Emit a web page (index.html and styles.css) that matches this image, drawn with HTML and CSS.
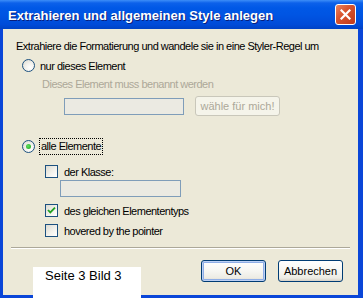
FILE: index.html
```html
<!DOCTYPE html>
<html lang="de">
<head>
    <meta charset="UTF-8">
    <title>Extrahieren und allgemeinen Style anlegen</title>
    <link rel="stylesheet" href="styles.css">
</head>
<body>
    <div class="window">
        <div class="titlebar">
            <span class="title">Extrahieren und allgemeinen Style anlegen</span>
            <span class="close">
                <svg width="11" height="11" viewBox="0 0 11 11"><path d="M1.5 1.5 L9.5 9.5 M9.5 1.5 L1.5 9.5" stroke="#fff" stroke-width="2.2" stroke-linecap="square"/></svg>
            </span>
        </div>

        <div class="dialog">
            <div class="intro">Extrahiere die Formatierung und wandele sie in eine Styler-Regel um</div>

            <div class="option first">
                <span class="radio"></span>
                <span>nur dieses Element</span>
            </div>
            <div class="hint">Dieses Element muss benannt werden</div>
            <div class="name-row">
                <span class="field"></span>
                <span class="btn disabled">wähle für mich!</span>
            </div>

            <div class="option second">
                <span class="radio checked"></span>
                <span class="focus">alle Elemente</span>
            </div>
            <div class="checks">
                <div class="check">
                    <span class="box"></span>
                    <span>der Klasse:</span>
                </div>
                <span class="field class-field"></span>
                <div class="check spaced">
                    <span class="box">
                        <svg width="9" height="9" viewBox="0 0 9 9"><path d="M1 4 L3.3 6.4 L8 1.6" fill="none" stroke="#21a121" stroke-width="1.8"/></svg>
                    </span>
                    <span>des gleichen Elemententyps</span>
                </div>
                <div class="check spaced">
                    <span class="box"></span>
                    <span>hovered by the pointer</span>
                </div>
            </div>

            <div class="separator"></div>

            <div class="actions">
                <span class="btn default">OK</span>
                <span class="btn">Abbrechen</span>
            </div>
        </div>

        <div class="note">Seite 3 Bild 3</div>
    </div>
</body>
</html>
```

FILE: styles.css
```css
body {
    margin: 0;
    background: #fff;
}
.window {
    position: relative;
    width: 363px;
    height: 298px;
    box-sizing: border-box;
    background: #0a46d8;
    padding: 0 5px 3px 3px;
    display: flex;
    flex-direction: column;
    overflow: hidden;
}
.titlebar {
    height: 29px;
    margin: 0 -5px 0 -3px;
    padding: 0 8px 0 8px;
    box-sizing: border-box;
    background: linear-gradient(#3d8ef8 0, #0c61ea 3px, #0058e6 8px, #0055e3 50%, #004bd8 85%, #0042c4 100%);
    display: flex;
    align-items: center;
    justify-content: space-between;
}
.title {
    font-family: "Liberation Sans", Arial, sans-serif;
    font-weight: bold;
    font-size: 13px;
    color: #fff;
    text-shadow: 1px 1px 0 #0a1e7a;
    margin-top: 1px;
}
.close {
    width: 21px;
    height: 21px;
    box-sizing: border-box;
    border: 1px solid #fff;
    border-radius: 3px;
    background: linear-gradient(135deg, #e98562 0, #d9552f 40%, #c23a1a 100%);
    display: flex;
    align-items: center;
    justify-content: center;
    margin-right: -1px;
}
.dialog {
    flex: 1;
    background: #ece9d8;
    padding: 11px 8px 0 8px;
    font-family: "Liberation Sans", Arial, sans-serif;
    font-size: 11px;
    letter-spacing: -0.5px;
    white-space: nowrap;
    color: #000;
    display: flex;
    flex-direction: column;
    align-items: flex-start;
}
.intro {
    margin-left: 5px;
    line-height: 13px;
}
.option {
    display: flex;
    align-items: center;
    gap: 5px;
    margin-left: 11px;
    height: 17px;
}
.option.first {
    margin-top: 4px;
}
.option.second {
    margin-top: 22px;
}
.radio {
    width: 13px;
    height: 13px;
    box-sizing: border-box;
    border: 1px solid #1c5180;
    border-radius: 50%;
    background: radial-gradient(circle at 65% 70%, #fff 0, #f2f1ec 45%, #d8d6cc 100%);
    display: flex;
    align-items: center;
    justify-content: center;
}
.radio.checked::after {
    content: "";
    width: 5px;
    height: 5px;
    border-radius: 50%;
    background: radial-gradient(circle at 40% 40%, #5ee35e, #1f9e1f);
}
.focus {
    outline: 1px dotted #000;
    padding: 1px 1px;
    line-height: 13px;
}
.hint {
    margin: 4px 0 0 31px;
    line-height: 13px;
    color: #aca899;
}
.name-row {
    display: flex;
    align-items: center;
    gap: 11px;
    margin: 5px 0 0 53px;
    height: 20px;
}
.field {
    display: block;
    width: 120px;
    height: 17px;
    box-sizing: border-box;
    border: 1px solid #7f9db9;
    background: #ebeae2;
}
.checks {
    margin: 10px 0 0 34px;
    display: flex;
    flex-direction: column;
    align-items: flex-start;
}
.check {
    display: flex;
    align-items: center;
    gap: 6px;
    height: 13px;
}
.check.spaced {
    margin-top: 7px;
}
.class-field {
    width: 121px;
    margin: 2px 0 0 15px;
}
.box {
    width: 13px;
    height: 13px;
    box-sizing: border-box;
    border: 1px solid #1c5180;
    background: linear-gradient(135deg, #dcdbd2 0, #f4f3ee 60%, #fff 100%);
    display: flex;
    align-items: center;
    justify-content: center;
}
.separator {
    align-self: stretch;
    margin-top: 10px;
    height: 1px;
    background: #aca899;
    border-bottom: 1px solid #fff;
}
.actions {
    align-self: stretch;
    display: flex;
    justify-content: flex-end;
    gap: 12px;
    margin: 11px 7px 0 0;
}
.btn {
    display: flex;
    align-items: center;
    justify-content: center;
    box-sizing: border-box;
    height: 22px;
    width: 65px;
    border: 1px solid #003c74;
    border-radius: 3px;
    background: linear-gradient(#fff 0, #f6f6f2 50%, #ecebe4 85%, #d6d0c5 100%);
    font-size: 11px;
    letter-spacing: 0;
    color: #000;
}
.btn.default {
    box-shadow: inset 0 0 0 1px #bcd0f4, inset 0 0 0 2px #8faee6;
}
.btn.disabled {
    width: 85px;
    height: 20px;
    border-color: #c9c7ba;
    background: #f5f4ea;
    color: #aca899;
}
.note {
    position: absolute;
    left: 33px;
    top: 267px;
    width: 108px;
    height: 31px;
    box-sizing: border-box;
    padding: 1px 0 0 12px;
    background: #fff;
    font-family: "Liberation Sans", Arial, sans-serif;
    font-size: 13px;
    line-height: 15px;
    color: #000;
    letter-spacing: 0;
}
```
